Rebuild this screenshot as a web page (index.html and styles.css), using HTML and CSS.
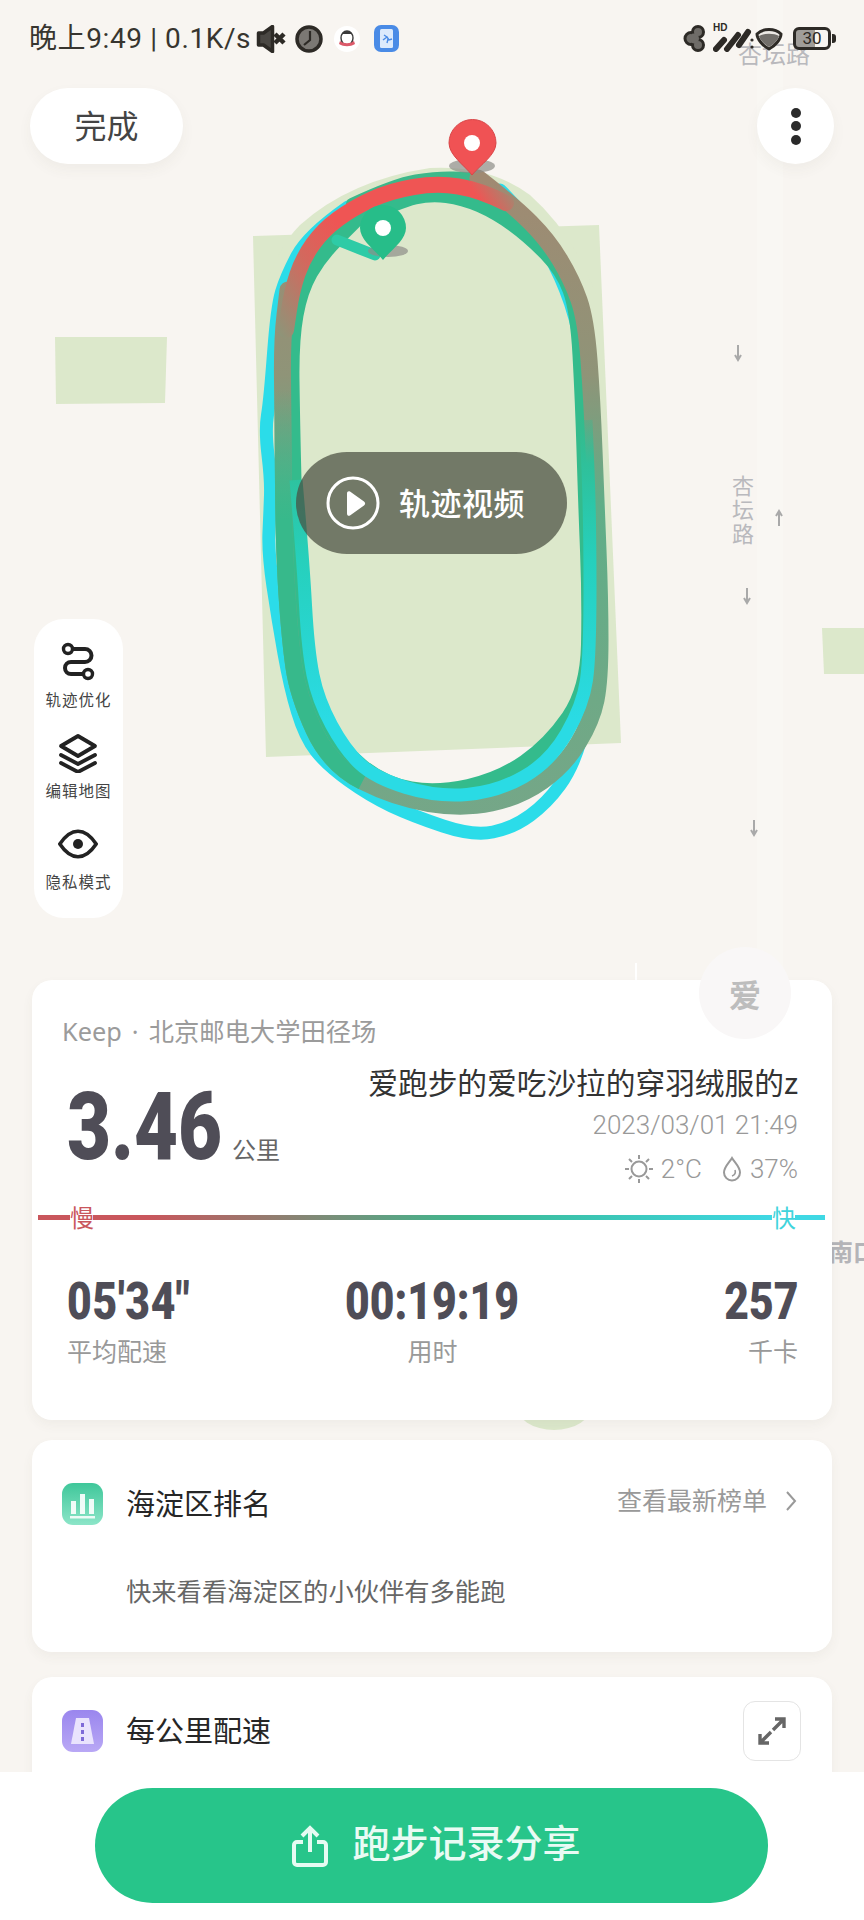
FILE: index.html
```html
<!DOCTYPE html>
<html lang="zh-CN">
<head>
<meta charset="utf-8">
<title>跑步记录</title>
<link rel="stylesheet" href="styles.css">
</head>
<body>
<div class="screen">
  <svg class="map" viewBox="0 0 864 1920" width="864" height="1920" aria-hidden="true">
    <defs>
      <linearGradient id="gA" gradientUnits="userSpaceOnUse" x1="0" y1="180" x2="0" y2="830">
        <stop offset="0" stop-color="#a08a72"/>
        <stop offset=".3" stop-color="#8f9478"/>
        <stop offset=".5" stop-color="#5fae88"/>
        <stop offset=".8" stop-color="#6fa986"/>
        <stop offset="1" stop-color="#76a688"/>
      </linearGradient>
      <linearGradient id="gL" gradientUnits="userSpaceOnUse" x1="0" y1="390" x2="0" y2="520">
        <stop offset="0" stop-color="#37b98b" stop-opacity="0"/>
        <stop offset="1" stop-color="#37b98b"/>
      </linearGradient>
      <linearGradient id="gC" gradientUnits="userSpaceOnUse" x1="0" y1="400" x2="0" y2="720">
        <stop offset="0" stop-color="#34bb8c" stop-opacity="0"/>
        <stop offset=".2" stop-color="#2fc09a"/>
        <stop offset=".5" stop-color="#26d0bc"/>
        <stop offset="1" stop-color="#2adbe4"/>
      </linearGradient>
      <linearGradient id="gD" gradientUnits="userSpaceOnUse" x1="284" y1="340" x2="512" y2="190">
        <stop offset="0" stop-color="#8f9478"/>
        <stop offset=".22" stop-color="#d2695e"/>
        <stop offset=".4" stop-color="#ef5554"/>
        <stop offset=".88" stop-color="#ef5554"/>
        <stop offset="1" stop-color="#a08a72"/>
      </linearGradient>
    </defs>
    <g class="roads">
      <path d="M770 0V980"/>
      <path class="road-thin" d="M636 963V980"/>
    </g>
    <polygon class="field" points="55,337 167,337 165,403 56,404"/>
    <polygon class="field" points="822,628 864,628 864,674 824,674"/>
    <polygon class="field" points="253,236 599,225 621,743 266,757"/>
    <path class="field" d="M262 300Q275 250 300 225Q350 180 430 168Q490 165 530 195Q575 235 598 300Z"/>
    <ellipse class="field" cx="554" cy="1405" rx="38" ry="25"/>

    <path class="trk outer" d="M348 207 Q308 235 297 256 T281.5 292 T273.5 353.5 T267.5 415 T268 455 T270.5 495 T269 531.5 T273 586.5 T284 653.5 T297.5 712 T316 751 T348.5 780.5 T391.5 806 T443 826 T493 832 T530 815.5 T560 785 T580.5 740 T589.5 676.5 T590.5 570 T588 450 T583.5 367.5 T570.5 303.5 T541.5 242 T500 190"/>
    <path class="trk top-green" d="M352 204 Q395 184 416 180.5 T453.5 177.5 T470 178"/>
    <path class="trk inner" d="M355 220 Q400 200 415 196.5 T446.5 195 T480 204.5 T513.5 224 T546.5 253 T570.5 290 T580.5 355 T584.5 450 T588 550 T589 645 T569 717.5 T525 762.5 T468.5 787 T411 789.5 T362.5 767.5 T325 720 T305 655 T297.5 580 T293.5 480 T291.5 380 T295.5 315 T310 272.5 T337.5 237.5 T355 220"/>
    <path class="trk slow" d="M478 178 Q513 205 530.5 222.5 T560 260 T579 300 T589 360 T594 450 T598 550 T600 640 T596 700 T578.5 742.5 T542.5 781 T491.5 803 T429 803.5 T362.5 781.5 T314 730 T294 667.5 T287 595 T283.5 485 T282.5 380 T285 315 T288 290"/>
    <path class="trk-butt slow-left" d="M362.5 781.5 Q330 765 314 730 T294 667.5 T287 595 T283.5 485 T282.5 390"/>
    <path class="trk-butt fast" d="M296 480 Q303 560 305.5 605 T313 675 T331.5 725 T360 764 T406 787.5 T467 794.5 T523.5 777 T566.5 733.5 T586.5 680 T590 587.5 T588 470 T586 420"/>
    <path class="trk red" d="M506 203 Q480 190 458.5 186.5 T413.5 187 T371.5 199.5 T338 219 T313 244 T297.5 274 T289 310 T286 330"/>
    <line class="trk stub" x1="337" y1="240" x2="375" y2="255"/>

    <ellipse class="pin-shadow" cx="388" cy="251" rx="20" ry="6"/>
    <path class="pin-green" d="M383 260 C375 250 360 240 360 228 A23 23 0 0 1 406 228 C406 240 391 250 383 260 Z"/>
    <circle class="pin-hole" cx="383" cy="228" r="8"/>
    <ellipse class="pin-shadow" cx="472" cy="166" rx="23" ry="7"/>
    <path class="pin-red" d="M472 175 C464 165 449 155 449 143 A23.5 23.5 0 0 1 496 143 C496 155 480 165 472 175 Z"/>
    <circle class="pin-hole" cx="472" cy="143" r="8"/>

    <text class="map-label" x="738" y="63">杏坛路</text>
    <text class="map-label map-label-v" x="732" y="494">杏</text>
    <text class="map-label map-label-v" x="732" y="518">坛</text>
    <text class="map-label map-label-v" x="732" y="542">路</text>
    <text class="map-label strong" x="829" y="1261">南口</text>
    <g class="arrows">
      <path d="M738 345v14m-3-4 3 5 3-5"/>
      <path d="M747 588v14m-3-4 3 5 3-5"/>
      <path d="M754 820v14m-3-4 3 5 3-5"/>
      <path d="M779 526v-14m-3 4 3-5 3 5"/>
    </g>
  </svg>

  <header class="status">
    <div class="status-side">
      <span class="status-text">晚上9:49 | 0.1K/s</span>
      <svg class="si si-mute" viewBox="0 0 30 28"><path d="M2.500 8h5l9-6.500v25l-9-6.500h-5z" fill="#4a4743" stroke="#2d2a26" stroke-width="3.500" stroke-linejoin="round"/><path d="M19 9l9 9M28 9l-9 9" stroke="#2d2a26" stroke-width="4.500"/></svg>
      <svg class="si si-clock" viewBox="0 0 28 28"><circle cx="14" cy="14" r="12" fill="#7b7874" stroke="#2d2a26" stroke-width="3.500"/><path d="M15 6v9l-6 5" fill="none" stroke="#2d2a26" stroke-width="2.200"/></svg>
      <svg class="si si-qq" viewBox="0 0 26 26"><circle cx="13" cy="13" r="13" fill="#fff"/><ellipse cx="13" cy="12" rx="6" ry="7" fill="#fff" stroke="#3a3a3a" stroke-width="1.400"/><path d="M13 5a6 6 0 0 0-5 3c3 0 7 0 10 0a6 6 0 0 0-5-3z" fill="#3a3a3a"/><path d="M6 15c4 3 10 3 14 0l1 3c-5 3-11 3-16 0z" fill="#dc5a6a"/></svg>
      <svg class="si si-app" viewBox="0 0 25 27"><rect width="25" height="27" rx="7" fill="#4a8be6"/><rect x="6" y="4" width="13" height="19" rx="1.500" fill="#dceafc"/><path d="M9 15l4-3 2 3 3-1M13 12l-3-2M13 18l1-4" stroke="#4a8be6" stroke-width="1.400" fill="none"/></svg>
    </div>
    <div class="status-side status-right">
      <svg class="si si-clover" viewBox="0 0 24 27"><g fill="#6f6c68" stroke="#2d2a26" stroke-width="3"><circle cx="8" cy="13.500" r="6"/><circle cx="15" cy="7" r="5.500"/><circle cx="15" cy="20" r="5.500"/></g><circle cx="11" cy="13.500" r="5" fill="#6f6c68"/></svg>
      <div class="si-signal">
        <span class="hd">HD</span>
        <svg class="si-bars" viewBox="0 0 42 24"><path d="M3 21L11 12M14 21L25 7M26 17L35 4" stroke="#2d2a26" stroke-width="6" stroke-linecap="round"/><circle cx="39" cy="12" r="1.600" fill="#2d2a26"/><circle cx="39" cy="19" r="1.600" fill="#2d2a26"/></svg>
      </div>
      <svg class="si si-wifi" viewBox="0 0 28 24"><path d="M2 7C8 1 20 1 26 7c0 5-6 12-12 15C8 19 2 12 2 7z" fill="#ece9e5" stroke="#2d2a26" stroke-width="3"/><path d="M4 9c5-3 15-3 20 0-1 4-6 9-10 11-4-2-9-7-10-11z" fill="#716e6a"/></svg>
      <div class="battery"><span class="battery-level">30</span></div>
    </div>
  </header>

  <div class="toolbar">
    <button class="done"><span>完成</span></button>
    <button class="more"><i></i><i></i><i></i></button>
  </div>

  <div class="video">
    <svg class="play" viewBox="0 0 54 54"><circle cx="27" cy="27" r="25" fill="none" stroke="#fff" stroke-width="3"/><path d="M21 17.500c0-2 1.500-2.800 3-2l14 10c1.500 1 1.500 3 0 4l-14 10c-1.500.8-3 0-3-2z" fill="#fff"/></svg>
    <span>轨迹视频</span>
  </div>

  <nav class="rail">
    <div class="rail-item">
      <svg class="rail-icon" viewBox="0 0 40 40"><path d="M15 7H27a6.500 6.500 0 0 1 0 13H13a6 6 0 0 0 0 12H25" fill="none" stroke="#222" stroke-width="4"/><circle cx="10" cy="7" r="4.500" fill="none" stroke="#222" stroke-width="3.400"/><circle cx="30" cy="32" r="4.500" fill="none" stroke="#222" stroke-width="3.400"/></svg>
      <span>轨迹优化</span>
    </div>
    <div class="rail-item">
      <svg class="rail-icon" viewBox="0 0 40 40"><path d="M20 3L37 13 20 23 3 13z" fill="none" stroke="#222" stroke-width="3.800" stroke-linejoin="round"/><path d="M3 22l17 9 17-9M3 30l17 9 17-9" fill="none" stroke="#222" stroke-width="3.800" stroke-linecap="round" stroke-linejoin="round"/></svg>
      <span>编辑地图</span>
    </div>
    <div class="rail-item">
      <svg class="rail-icon" viewBox="0 0 44 40"><path d="M2 20C8 11 15 6 22 6s14 5 20 14c-6 9-13 14-20 14S8 29 2 20z" fill="none" stroke="#222" stroke-width="4" stroke-linejoin="round"/><circle cx="22" cy="20" r="5.500" fill="#222"/></svg>
      <span>隐私模式</span>
    </div>
  </nav>

  <main class="cards">
    <section class="card card-summary">
      <div class="avatar"><span>爱</span></div>
      <p class="place">Keep · 北京邮电大学田径场</p>
      <div class="hero">
        <div class="distance"><b>3.46</b><span>公里</span></div>
        <div class="meta">
          <p class="runner">爱跑步的爱吃沙拉的穿羽绒服的z</p>
          <p class="date">2023/03/01 21:49</p>
          <p class="weather">
            <svg class="sun" viewBox="0 0 30 30"><circle cx="15" cy="15" r="7.500" fill="none" stroke="#999" stroke-width="2"/><path d="M15 1v4M15 25v4M1 15h4M25 15h4M5 5l3 3M22 22l3 3M5 25l3-3M22 8l3-3" stroke="#999" stroke-width="2"/></svg>
            <span>2°C</span>
            <svg class="drop" viewBox="0 0 20 26"><path d="M10 2C7 7 2 11 2 16.500A8 8 0 0 0 18 16.500C18 11 13 7 10 2z" fill="none" stroke="#999" stroke-width="2"/><path d="M13 14c1 3 0 5-3 6" fill="none" stroke="#999" stroke-width="1.600"/></svg>
            <span>37%</span>
          </p>
        </div>
      </div>
      <div class="pace">
        <i class="seg seg-slow"></i><span class="slow-label">慢</span><i class="seg seg-mid"></i><span class="fast-label">快</span><i class="seg seg-fast"></i>
      </div>
      <div class="stats">
        <div class="stat stat-left"><b>05'34"</b><span>平均配速</span></div>
        <div class="stat stat-center"><b>00:19:19</b><span>用时</span></div>
        <div class="stat stat-right"><b>257</b><span>千卡</span></div>
      </div>
    </section>

    <section class="card card-rank">
      <div class="card-head">
        <svg class="badge" viewBox="0 0 41 42"><defs><linearGradient id="gB1" x1="0" y1="0" x2="0" y2="1"><stop offset="0" stop-color="#3fc79a"/><stop offset="1" stop-color="#8ce5c8"/></linearGradient></defs><rect width="41" height="42" rx="11" fill="url(#gB1)"/><path d="M9 18h5v13H9zM18 11h5v20h-5zM27 16h5v15h-5z" fill="#fff" opacity=".9"/><rect x="8" y="33" width="25" height="2.500" fill="#fff" opacity=".85"/></svg>
        <h2>海淀区排名</h2>
        <span class="head-link">查看最新榜单</span>
        <svg class="chev" viewBox="0 0 12 22"><path d="M2 2l8 9-8 9" fill="none" stroke="#999" stroke-width="2"/></svg>
      </div>
      <p class="rank-desc">快来看看海淀区的小伙伴有多能跑</p>
    </section>

    <section class="card card-splits">
      <div class="card-head">
        <svg class="badge" viewBox="0 0 41 42"><defs><linearGradient id="gB2" x1="0" y1="0" x2="0" y2="1"><stop offset="0" stop-color="#9a86ee"/><stop offset="1" stop-color="#b9a8f5"/></linearGradient></defs><rect width="41" height="42" rx="11" fill="url(#gB2)"/><path d="M14 8h13l5 26H9z" fill="#e9e3fd"/><path d="M19 13h3v4h-3zM19 20h3v4h-3zM19 27h3v4h-3z" fill="#7e6ad8"/></svg>
        <h2>每公里配速</h2>
        <div class="expand"><svg viewBox="0 0 32 32"><path d="M19 4h9v9M28 4L17 15M13 28H4v-9M4 28l11-11" fill="none" stroke="#666" stroke-width="3.400"/></svg></div>
      </div>
    </section>
  </main>

  <footer class="bottom">
    <button class="share">
      <svg class="share-icon" viewBox="0 0 36 42"><path d="M18 27V3M10 11l8-8 8 8" fill="none" stroke="#e6fbf2" stroke-width="4"/><path d="M11 17H5a3 3 0 0 0-3 3v17a3 3 0 0 0 3 3h26a3 3 0 0 0 3-3V20a3 3 0 0 0-3-3h-6" fill="none" stroke="#e6fbf2" stroke-width="4"/></svg>
      <span>跑步记录分享</span>
    </button>
  </footer>
</div>
</body>
</html>
```
FILE: styles.css
```css
* { box-sizing: border-box; margin: 0; padding: 0; }
html, body { background: #f8f5f1; }
body {
  width: 864px;
  height: 1920px;
  overflow: hidden;
  font-family: "Noto Sans CJK SC", "Noto Sans", sans-serif;
}
button { border: 0; font: inherit; background: none; }
.screen { position: relative; width: 864px; height: 1920px; overflow: hidden; background: #f8f5f1; }

/* map */
.map { position: absolute; left: 0; top: 0; }
.roads path { fill: none; stroke: #f9f7f3; stroke-width: 26; }
.roads .road-thin { stroke: #fff; stroke-width: 2; }
.field { fill: #dce8cb; }
.trk { fill: none; stroke-linejoin: round; stroke-linecap: round; }
.trk-butt { fill: none; stroke-linejoin: round; stroke-linecap: butt; }
.outer { stroke: #2bdce9; stroke-width: 13; }
.top-green { stroke: #3db88a; stroke-width: 12; }
.inner { stroke: #34bb8c; stroke-width: 16; }
.slow { stroke: url(#gA); stroke-width: 17; }
.slow-left { stroke: url(#gL); stroke-width: 17; }
.fast { stroke: url(#gC); stroke-width: 13; }
.red { stroke: url(#gD); stroke-width: 16; }
.stub { stroke: #2ecba6; stroke-width: 11; }
.pin-shadow { fill: #8d8d88; opacity: .7; }
.pin-green { fill: #27bd89; }
.pin-red { fill: #f05254; stroke: #d94648; stroke-width: 1; }
.pin-hole { fill: #fff; }
.map-label { font-size: 24px; fill: #b9b9bd; font-family: "Noto Sans CJK SC", sans-serif; }
.map-label-v { font-size: 22px; }
.map-label.strong { font-weight: 700; fill: #b4b4b8; }
.arrows path { fill: none; stroke: #a9a9a9; stroke-width: 2; }

/* status bar */
.status {
  position: relative;
  height: 64px;
  padding: 25px 29px 0 29px;
  display: flex;
  justify-content: space-between;
  align-items: flex-start;
}
.status-side { display: flex; align-items: center; height: 27px; }
.status-text { font-family: "Roboto", "Noto Sans CJK SC", sans-serif; font-size: 28px; line-height: 27px; color: #37352f; white-space: nowrap; letter-spacing: .6px; }
.si { display: block; flex: none; }
.si-mute { width: 30px; height: 28px; margin-left: 5px; }
.si-clock { width: 28px; height: 28px; margin-left: 9px; }
.si-qq { width: 26px; height: 26px; margin-left: 11px; }
.si-app { width: 25px; height: 27px; margin-left: 14px; }
.status-right { gap: 0; }
.si-clover { width: 24px; height: 27px; }
.si-signal { position: relative; width: 42px; height: 27px; margin-left: 6px; }
.hd { position: absolute; left: 0; top: -2px; font: 700 10px/10px "Liberation Sans", sans-serif; color: #2d2a26; }
.si-bars { position: absolute; left: 0; top: 3px; width: 42px; height: 24px; }
.si-wifi { width: 28px; height: 24px; margin-left: 0; }
.battery {
  position: relative;
  width: 38px;
  height: 23px;
  margin-left: 10px;
  margin-right: 4px;
  border: 3px solid #2d2a26;
  border-radius: 6px;
  background: linear-gradient(90deg, #a09d99 0 60%, #f8f5f1 60%);
  display: flex;
  align-items: center;
  justify-content: center;
}
.battery::after { content: ""; position: absolute; right: -8px; top: 4px; width: 4px; height: 9px; background: #2d2a26; border-radius: 0 3px 3px 0; }
.battery-level { font: 400 17px/17px "Roboto", sans-serif; color: #2d2a26; }

/* toolbar */
.toolbar { position: relative; margin-top: 24px; height: 76px; padding: 0 30px; display: flex; justify-content: space-between; }
.done { width: 153px; height: 76px; border-radius: 38px; background: #fff; color: #444; font-size: 32px; padding-bottom: 4px; box-shadow: 0 6px 14px rgba(80, 70, 50, .05); }
.more { width: 77px; height: 76px; border-radius: 50%; background: #fff; box-shadow: 0 6px 14px rgba(80, 70, 50, .05); display: flex; flex-direction: column; align-items: center; justify-content: center; gap: 3.500px; }
.more i { display: block; width: 10px; height: 10px; border-radius: 50%; background: #2a2a2a; }

/* video pill over the map */
.video {
  position: absolute;
  left: 296px;
  top: 452px;
  width: 271px;
  height: 102px;
  border-radius: 51px;
  background: rgba(74, 78, 64, .72);
  display: flex;
  align-items: center;
  padding-left: 30px;
  gap: 19px;
  color: #fff;
  font-size: 31px;
  font-weight: 500;
  letter-spacing: .5px;
}
.video span { padding-bottom: 4px; }
.play { width: 54px; height: 54px; flex: none; }

/* tool rail */
.rail {
  position: relative;
  margin: 455px 0 0 34px;
  width: 89px;
  height: 299px;
  border-radius: 30px;
  background: #fff;
  padding-top: 23px;
  display: flex;
  flex-direction: column;
  gap: 13px;
  align-items: center;
}
.rail-item { display: flex; flex-direction: column; align-items: center; height: 78px; }
.rail-icon { width: 40px; height: 40px; display: block; margin-bottom: 5px; }
.rail-item span { font-size: 15.500px; line-height: 24px; color: #444; letter-spacing: 1px; white-space: nowrap; }

/* cards */
.cards { position: relative; margin: 62px 0 0 32px; width: 800px; display: flex; flex-direction: column; }
.card { position: relative; background: #fff; border-radius: 20px; box-shadow: 0 5px 12px rgba(80, 70, 50, .05); }
.card-summary { height: 440px; padding: 33px 34px 0 30px; }
.avatar { position: absolute; left: 667px; top: -33px; width: 92px; height: 92px; border-radius: 50%; background: #f9f7f7; display: flex; align-items: center; justify-content: center; }
.avatar span { font-size: 32px; font-weight: 700; color: #bdbdbd; }
.place { font-family: "Noto Sans", "Noto Sans CJK SC", sans-serif; font-size: 25.300px; line-height: 36px; color: #9b9b9b; white-space: nowrap; word-spacing: 3.500px; }
.hero { display: flex; justify-content: space-between; margin-top: 15px; height: 110px; }
.distance { display: flex; align-items: baseline; padding: 0 0 0 5px; margin-top: 13px; gap: 9px; height: 100px; }
.distance b { display: block; font-family: "Roboto", sans-serif; font-size: 95px; line-height: 100px; color: #4f4d57; font-weight: 900; transform: scaleX(.8); transform-origin: left center; margin-right: -38px; }
.distance span { font-size: 24px; color: #666; }
.meta { text-align: right; }
.runner { font-size: 29.700px; line-height: 40px; margin-top: -2px; color: #333; white-space: nowrap; }
.date { font-family: "Roboto", sans-serif; font-weight: 300; font-size: 26px; line-height: 40px; margin-top: 3px; color: #999; white-space: nowrap; }
.weather { font-family: "Roboto", sans-serif; font-weight: 300; font-size: 26px; line-height: 40px; margin-top: 4px; color: #999; display: flex; justify-content: flex-end; align-items: center; }
.sun { width: 30px; height: 30px; margin-right: 7px; }
.drop { width: 20px; height: 26px; margin: 0 8px 0 20px; }
.pace { display: flex; align-items: center; margin: 28px -27px 0 -24px; height: 30px; }
.seg { display: block; height: 5px; }
.seg-slow { width: 32px; background: #c9565c; }
.seg-mid { flex: 1; background: linear-gradient(90deg, #c9565c 0, #c9565c 8%, #3db88e 55%, #3bc6b6 75%, #3fd8e4 100%); }
.seg-fast { width: 30px; background: #3fd8e4; }
.slow-label { width: 23px; text-align: center; font-size: 24px; line-height: 30px; color: #c9565c; }
.fast-label { width: 23px; text-align: center; font-size: 24px; line-height: 30px; color: #3fd4dc; }
.stats { display: flex; padding-left: 5px; margin-top: 40px; }
.stat { flex: 1; display: flex; flex-direction: column; }
.stat-center { align-items: center; }
.stat-right { align-items: flex-end; }
.stat b { display: block; font-family: "Roboto", sans-serif; font-size: 52px; line-height: 60px; font-weight: 900; color: #4f4d57; white-space: nowrap; transform: scaleX(.82); transform-origin: left center; }
.stat-left b { letter-spacing: .9px; }
.stat-center b { transform-origin: center; }
.stat-right b { transform-origin: right center; }
.stat span { font-size: 25px; line-height: 36px; margin-top: 0; color: #999; }

.card-rank { height: 212px; margin-top: 20px; padding: 43px 35px 0 30px; }
.card-splits { height: 180px; margin-top: 25px; padding: 33px 31px 0 30px; }
.card-head { display: flex; align-items: center; height: 42px; }
.badge { width: 41px; height: 42px; flex: none; }
h2 { font-size: 29px; line-height: 42px; font-weight: 400; color: #262626; margin: 0 0 4px 23px; flex: 1; white-space: nowrap; }
.head-link { font-size: 25px; color: #999; white-space: nowrap; margin-bottom: 10px; }
.chev { width: 12px; height: 22px; margin: 0 0 6px 18px; flex: none; }
.rank-desc { font-size: 25.300px; line-height: 36px; color: #666; margin: 47px 0 0 64px; white-space: nowrap; }
.expand { width: 58px; height: 60px; border: 1px solid #e4e4e4; border-radius: 12px; display: flex; align-items: center; justify-content: center; flex: none; }
.expand svg { width: 32px; height: 32px; }

/* bottom bar overlay */
.bottom { position: absolute; left: 0; right: 0; bottom: 0; height: 148px; background: #fff; padding: 16px 96px 0 95px; }
.share { width: 673px; height: 115px; border-radius: 58px; background: #27c58a; color: #e9fbf4; display: flex; align-items: center; justify-content: center; gap: 24px; font-size: 38px; font-weight: 500; padding-left: 10px; }
.share span { padding-bottom: 10px; }
.share-icon { width: 36px; height: 42px; flex: none; }
```
